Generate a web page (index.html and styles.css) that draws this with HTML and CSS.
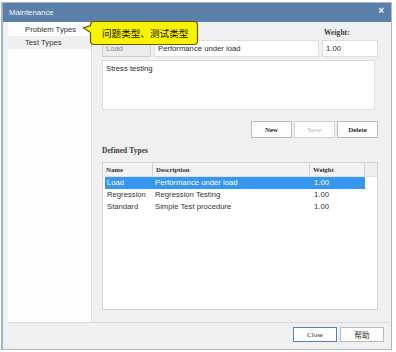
FILE: index.html
```html
<!DOCTYPE html>
<html lang="en">
  <head>
    <meta charset="UTF-8" />
    <title>Maintenance</title>
    <link rel="stylesheet" href="styles.css">
  </head>
  <body>
    <main class="window">
      <header class="title-bar">
        <span class="title-text">Maintenance</span>
        <span class="title-close">&#215;</span>
      </header>

      <div class="window-body">
        <div class="main">
          <nav class="nav">
            <div class="nav-item">Problem Types</div>
            <div class="nav-item is-current">Test Types</div>
          </nav>

          <section class="content">
            <div class="field-labels">
              <span></span>
              <span></span>
              <span class="label">Weight:</span>
            </div>
            <div class="fields">
              <div class="field is-disabled">Load</div>
              <div class="field">Performance under load</div>
              <div class="field">1.00</div>
            </div>
            <div class="notes">Stress testing</div>

            <div class="actions">
              <button class="btn">New</button>
              <button class="btn is-disabled">Save</button>
              <button class="btn">Delete</button>
            </div>

            <div class="label section-label">Defined Types</div>

            <div class="grid">
              <div class="grid-head">
                <span>Name</span>
                <span>Description</span>
                <span>Weight</span>
                <span></span>
              </div>
              <div class="grid-row is-selected">
                <span>Load</span>
                <span>Performance under load</span>
                <span>1.00</span>
              </div>
              <div class="grid-row">
                <span>Regression</span>
                <span>Regression Testing</span>
                <span>1.00</span>
              </div>
              <div class="grid-row">
                <span>Standard</span>
                <span>Simple Test procedure</span>
                <span>1.00</span>
              </div>
            </div>
          </section>
        </div>

        <footer class="footer">
          <button class="btn is-default">Close</button>
          <button class="btn is-cjk">帮助</button>
        </footer>
      </div>
    </main>

    <!-- annotation bubble over the dialog -->
    <div class="callout">
      <svg class="callout-shape" width="118" height="28" viewBox="0 0 118 28">
        <path
          d="M12 1.5 H112 Q115.5 1.5 115.5 5 V21 Q115.5 24.5 112 24.5 H12 Q8.5 24.5 8.5 21 V12.5 L1.5 8 L8.5 5.5 V5 Q8.5 1.5 12 1.5 Z"
          fill="#fbf200"
          stroke="#5c5a10"
          stroke-width="1.2"
        />
      </svg>
      <span class="callout-text">问题类型、测试类型</span>
    </div>
  </body>
</html>
```

FILE: styles.css
```css
:root {
  --dialog-bg: #f0f0f0;
  --title-bg: #5a7fa8;
  --line: #d6d6d6;
  --select: #3797ee;
  --ui-font: "Liberation Sans", Arial, sans-serif;
  --label-font: "Liberation Serif", "Times New Roman", serif;
}

*,
*::before,
*::after {
  box-sizing: border-box;
  margin: 0;
  padding: 0;
}

body {
  background: #ffffff;
  font-family: var(--ui-font);
  font-size: 7.7px;
  color: #2a2a2a;
  padding: 2px 0 0 1px;
  position: relative;
  width: 396px;
  height: 352px;
  overflow: hidden;
}

.window {
  width: 391px;
  height: 348px;
  border: 1px solid #a9b8c8;
  border-left: 2px solid #a3b2c4;
  background: var(--dialog-bg);
  display: flex;
  flex-direction: column;
}

.title-bar {
  height: 19px;
  background: var(--title-bg);
  color: #f4f7fb;
  display: flex;
  align-items: center;
  justify-content: space-between;
  padding: 0 7px 0 6px;
  font-size: 7.8px;
}

.title-close {
  font-size: 10px;
  line-height: 1;
  font-weight: bold;
  margin-top: -4px;
}

.window-body {
  flex: 1;
  display: flex;
  flex-direction: column;
  padding: 0 2px 0 5px;
}

.main {
  height: 301px;
  display: flex;
  border-bottom: 1px solid #dadada;
}

.nav {
  width: 85px;
  background: #fdfdfd;
  border-right: 1px solid #dcdcdc;
  padding-top: 1px;
}

.nav-item {
  height: 13px;
  line-height: 13px;
  padding-left: 17px;
  color: #333;
}

.nav-item.is-current {
  background: #efefef;
}

.content {
  flex: 1;
  padding: 5px 11px 0 10px;
  display: flex;
  flex-direction: column;
}

.label {
  font-family: var(--label-font);
  font-size: 7.4px;
  font-weight: bold;
  color: #3a3a3a;
  letter-spacing: 0.1px;
}

.field-labels,
.fields {
  display: grid;
  grid-template-columns: 49px 165px 56px;
  column-gap: 3px;
}

.field-labels {
  height: 13px;
  line-height: 11px;
}

.field-labels .label {
  padding-left: 2px;
}

.field {
  height: 17px;
  line-height: 15px;
  background: #ffffff;
  border: 1px solid #dedede;
  padding-left: 3px;
}

.field.is-disabled {
  background: #ececec;
  border-color: #cfcfcf;
  color: #8a8a8a;
}

.notes {
  margin-top: 3px;
  height: 50px;
  width: 273px;
  background: #ffffff;
  border: 1px solid #dedede;
  padding: 3px 3px;
}

.actions {
  margin-top: 11px;
  display: flex;
  justify-content: flex-end;
  gap: 2px;
}

.btn {
  width: 41px;
  height: 17px;
  background: #fdfdfd;
  border: 1px solid #b9b9b9;
  font-family: var(--label-font);
  font-size: 7px;
  font-weight: bold;
  color: #2a2a2a;
}

.btn.is-disabled {
  border-color: #d2d2d2;
  color: #b3b3b3;
  font-weight: normal;
}

.section-label {
  margin-top: 8px;
  height: 10px;
  line-height: 10px;
}

.grid {
  margin-top: 6px;
  height: 148px;
  background: #ffffff;
  border: 1px solid #d4d4d4;
}

.grid-head {
  display: grid;
  grid-template-columns: 50px 157px 55px 1fr;
  height: 14px;
  background: #f2f2f2;
  border-bottom: 1px solid #e0e0e0;
  font-family: var(--label-font);
  font-size: 6.8px;
  font-weight: bold;
  color: #333;
  line-height: 13px;
}

.grid-head span {
  border-right: 1px solid #d2d2d2;
  padding-left: 3px;
}

.grid-head span:last-child {
  border-right: none;
  background: #eeeeee;
}

.grid-row {
  display: grid;
  grid-template-columns: 48px 157px 55px;
  width: 260px;
  margin-left: 2px;
  height: 12px;
  line-height: 12px;
  color: #333;
}

.grid-row span {
  padding-left: 2px;
  white-space: nowrap;
}

.grid-row span:nth-child(3) {
  padding-left: 4px;
}

.grid-row.is-selected {
  background: var(--select);
  color: #ffffff;
}

.footer {
  display: flex;
  justify-content: flex-end;
  gap: 3px;
  padding: 4px 5px 0 0;
}

.footer .btn {
  width: 44px;
  height: 15px;
  font-weight: normal;
}

.btn.is-default {
  border-color: #4a86bb;
}

.btn.is-cjk {
  font-family: "Noto Sans CJK SC", sans-serif;
  font-size: 7.5px;
}

.callout {
  position: absolute;
  left: 82px;
  top: 20px;
  width: 118px;
  height: 28px;
}

.callout-shape {
  position: absolute;
  inset: 0;
}

.callout-text {
  position: absolute;
  left: 20px;
  top: 6px;
  font-family: "Noto Sans CJK SC", sans-serif;
  font-size: 9.6px;
  line-height: 14px;
  color: #111;
}
```
